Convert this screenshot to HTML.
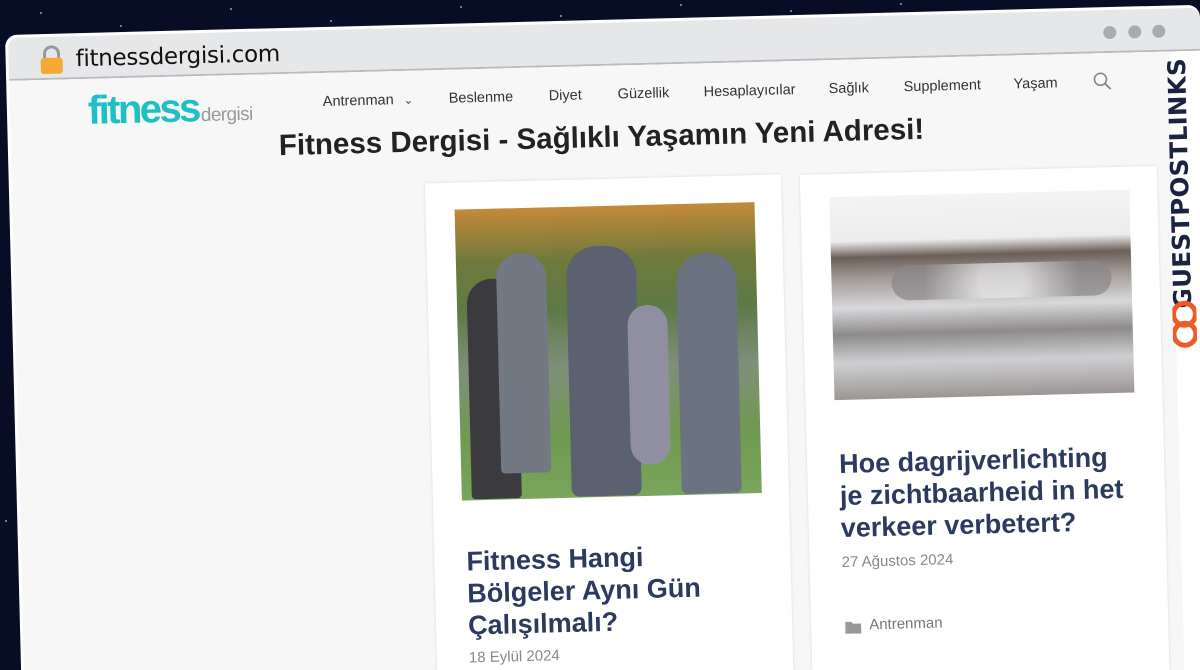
<!DOCTYPE html>
<html><head><meta charset="utf-8"><style>
*{margin:0;padding:0;box-sizing:border-box}
html,body{width:1200px;height:670px;overflow:hidden;background:#080d26;font-family:"Liberation Sans",sans-serif}
#root{position:fixed;left:0;top:0;width:1200px;height:670px;overflow:hidden;background:#080d26}
.star{position:absolute;width:2px;height:2px;background:#cfd6ff;border-radius:50%;opacity:.7}
#w{position:absolute;left:5px;top:35px;width:1195px;height:680px;transform-origin:0 0;transform:rotate(-1.45deg);background:#fff;border-radius:12px;overflow:hidden}
#bar{position:absolute;left:3px;top:3px;right:0;height:43px;background:#e6e7e9;border-bottom:2px solid #b9bbbf;border-radius:10px 10px 0 0}
.dot{position:absolute;top:16px;width:13px;height:13px;border-radius:50%;background:#a9abaf}
#url{position:absolute;left:67px;top:10px;font-size:23px;color:#111;font-family:"DejaVu Sans",sans-serif;letter-spacing:-.3px}
#page{position:absolute;left:3px;top:46px;width:1160px;height:634px;background:#f7f7f7;overflow:hidden}
.nav{position:absolute;top:21px;font-size:14.5px;color:#333}
h1{position:absolute;left:268px;top:55px;font-size:29.5px;color:#222;font-weight:bold;white-space:nowrap}
.card{position:absolute;background:#fff;box-shadow:0 0 3px rgba(0,0,0,.12)}
.t{position:absolute;font-size:27px;line-height:32px;font-weight:bold;color:#2b3a5e}
.d{position:absolute;font-size:15px;color:#888}
</style></head><body><div id="root">
<div class="star" style="left:40px;top:12px"></div><div class="star" style="left:120px;top:25px"></div><div class="star" style="left:230px;top:8px"></div><div class="star" style="left:330px;top:20px"></div><div class="star" style="left:460px;top:6px"></div><div class="star" style="left:560px;top:15px"></div><div class="star" style="left:680px;top:4px"></div><div class="star" style="left:790px;top:10px"></div><div class="star" style="left:900px;top:3px"></div><div class="star" style="left:15px;top:300px"></div><div class="star" style="left:5px;top:520px"></div>
<div id="w">
 <div id="bar">
  <svg style="position:absolute;left:30px;top:8px" width="26" height="30" viewBox="0 0 26 30"><path d="M6 13V9a7 7 0 0 1 14 0v4" fill="none" stroke="#999" stroke-width="3"/><rect x="2" y="13" width="22" height="16" rx="3" fill="#f7a935"/></svg>
  <div id="url">fitnessdergisi.com</div>
  <div class="dot" style="left:1095px"></div><div class="dot" style="left:1120px"></div><div class="dot" style="left:1144px"></div>
 </div>
 <div id="page">
  <div style="position:absolute;left:78px;top:10px;white-space:nowrap"><span style="font-size:40px;font-weight:bold;color:#1fc0c3;letter-spacing:-2.6px">fitness</span><span style="font-size:19px;color:#999;letter-spacing:-.6px;margin-left:2px">dergisi</span></div>
  <div class="nav" style="left:313px">Antrenman <span style="font-size:11px;margin-left:6px">&#8964;</span></div>
  <div class="nav" style="left:439px">Beslenme</div>
  <div class="nav" style="left:539px">Diyet</div>
  <div class="nav" style="left:608px">Güzellik</div>
  <div class="nav" style="left:694px">Hesaplayıcılar</div>
  <div class="nav" style="left:819px">Sağlık</div>
  <div class="nav" style="left:894px">Supplement</div>
  <div class="nav" style="left:1004px">Yaşam</div>
  <svg style="position:absolute;left:1083px;top:18px" width="20" height="20" viewBox="0 0 20 20"><circle cx="8" cy="8" r="6" fill="none" stroke="#888" stroke-width="1.6"/><path d="M12.5 12.5L18 18" stroke="#888" stroke-width="1.8"/></svg>
  <h1>Fitness Dergisi - Sağlıklı Yaşamın Yeni Adresi!</h1>
  <div class="card" style="left:413px;top:113px;width:356px;height:530px">
   <div style="position:absolute;left:29px;top:27px;width:300px;height:291px;background:linear-gradient(180deg,#c48a3a 0%,#6f7a3c 18%,#5d7a45 35%,#7e8f7a 55%,#6f9a4f 80%,#7aa55c 100%)">
    <div style="position:absolute;left:110px;top:40px;width:70px;height:250px;background:#5b6170;border-radius:30px 30px 8px 8px"></div>
    <div style="position:absolute;left:220px;top:50px;width:60px;height:240px;background:#6c7380;border-radius:28px 28px 6px 6px"></div>
    <div style="position:absolute;left:10px;top:70px;width:50px;height:220px;background:#3a3a3f;border-radius:25px 25px 4px 4px"></div>
    <div style="position:absolute;left:40px;top:45px;width:50px;height:220px;background:#727983;border-radius:25px 25px 4px 4px"></div>
    <div style="position:absolute;left:170px;top:100px;width:40px;height:160px;background:#8f8f9f;border-radius:20px"></div>
   </div>
   <div class="t" style="left:32px;top:363px">Fitness Hangi<br>Bölgeler Aynı Gün<br>Çalışılmalı?</div>
   <div class="d" style="left:32px;top:467px">18 Eylül 2024</div>
  </div>
  <div class="card" style="left:788px;top:114px;width:357px;height:530px">
   <div style="position:absolute;left:29px;top:23px;width:300px;height:203px;background:linear-gradient(180deg,#f4f4f4 0%,#ececec 22%,#6c5e58 30%,#a19894 40%,#d8d8db 55%,#8d8a8a 68%,#cfcfd2 82%,#9b9694 100%)">
    <div style="position:absolute;left:60px;top:70px;width:220px;height:35px;background:radial-gradient(circle,#e8e8ea 20%,#8a8688 70%);border-radius:18px;opacity:.7"></div>
   </div>
   <div class="t" style="left:32px;top:274px">Hoe dagrijverlichting<br>je zichtbaarheid in het<br>verkeer verbetert?</div>
   <div class="d" style="left:32px;top:380px">27 Ağustos 2024</div>
   <svg style="position:absolute;left:34px;top:447px" width="16" height="13" viewBox="0 0 16 13"><path d="M0 1h6l2 2h8v10H0z" fill="#999"/></svg>
   <div class="d" style="left:58px;top:443px;color:#777">Antrenman</div>
  </div>
 </div>
 <div style="position:absolute;left:1163px;top:48px;width:35px;height:640px;background:#fff"></div>
 <div style="position:absolute;left:1153px;top:36px;width:36px;height:300px">
  <div style="position:absolute;left:-105px;top:126px;width:246px;height:36px;transform:rotate(-90deg);font-size:24.5px;font-weight:900;color:#1a2340;letter-spacing:.3px;text-align:center;line-height:36px;font-family:'DejaVu Sans',sans-serif">GUESTPOSTLINKS</div>
  <svg style="position:absolute;left:7px;top:258px" width="24" height="50" viewBox="0 0 24 50"><path d="M12 4a9 9 0 0 0 0 22M12 24a9 9 0 0 1 0 22M12 4a9 9 0 0 1 0 22M12 24a9 9 0 0 0 0 22" fill="none" stroke="#f05a28" stroke-width="5"/></svg>
 </div>
</div>
</div></body></html>
